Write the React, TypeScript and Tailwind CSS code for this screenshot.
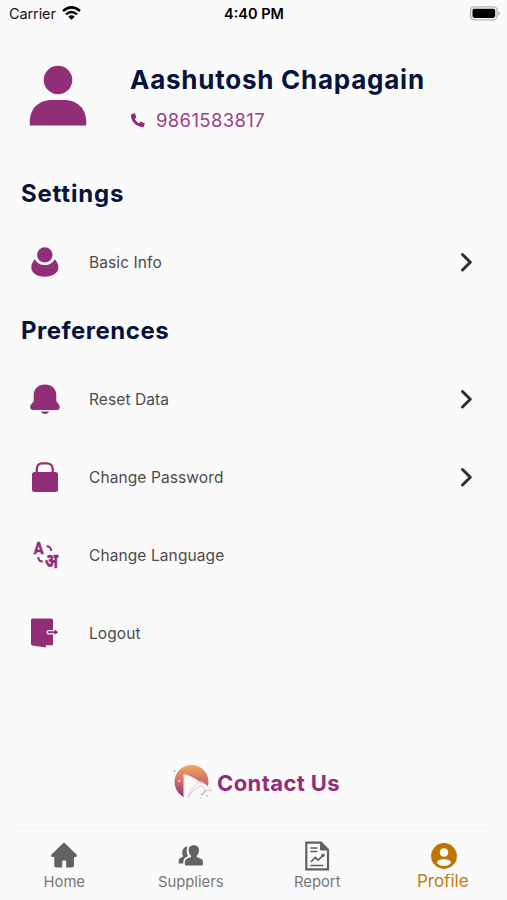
import { JSX, ReactNode } from "react";

type Row = { label: string; icon: ReactNode; arrow: boolean };
type Tab = { label: string; icon: ReactNode; active?: boolean };

function PersonIcon(): JSX.Element {
  return (
    <svg width="58" height="61" viewBox="0 0 58 61" fill="#922e78">
      <circle cx="29" cy="15" r="14.300" />
      <path d="M.8 60.500V56.500C.8 43.500 10 35 23 35H35C48 35 57.200 43.500 57.200 56.500V60.500Z" />
    </svg>
  );
}

function BasicInfoIcon(): JSX.Element {
  return (
    <svg width="30" height="30" viewBox="0 0 30 30" fill="#922e78">
      <circle cx="14.800" cy="7.900" r="7.700" />
      <path d="M4.900 12.200C6.700 15.800 10.300 18 14.800 18S22.900 15.800 24.700 12.200C27 14.500 28.400 17.500 28.400 20.500C28.400 26 22.500 29.700 14.800 29.700S1.300 26 1.300 20.500C1.300 17.500 2.600 14.500 4.900 12.200Z" />
    </svg>
  );
}

function BellIcon(): JSX.Element {
  return (
    <svg width="30" height="31" viewBox="0 0 30 31" fill="#922e78">
      <path d="M15 .5C22 .5 26.300 5 26.300 11V16.500C26.300 18.500 29.800 20 29.800 23C29.800 25 28.700 26 27 26H3C1.300 26 .2 25 .2 23C.2 20 3.700 18.500 3.700 16.500V11C3.700 5 8 .5 15 .5Z" />
      <path d="M10.800 27.500H19C18.500 29 17 30 15 30S11.400 29 10.800 27.500Z" />
    </svg>
  );
}

function LockIcon(): JSX.Element {
  return (
    <svg width="30" height="30" viewBox="0 0 30 30">
      <path
        d="M6.800 11V7C6.800 3.500 9 1.300 12 1.300H17C20 1.300 22.700 3.500 22.700 7V11"
        fill="none"
        stroke="#922e78"
        strokeWidth="2.300"
      />
      <rect x="2" y="10" width="26" height="20" rx="2.500" fill="#922e78" />
    </svg>
  );
}

function LanguageIcon(): JSX.Element {
  return (
    <svg className="overflow-visible" width="30" height="30" viewBox="0 0 30 30" fill="#922e78" stroke="#922e78">
      <text x="3.800" y="14.300" fontSize="16.500" fontWeight="700" strokeWidth=".6" fontFamily="Roboto, sans-serif" textLength="9.800" lengthAdjust="spacingAndGlyphs">
        A
      </text>
      <text x="15" y="27.500" fontSize="20" fontWeight="700" strokeWidth=".6" fontFamily="'Noto Sans', sans-serif" textLength="13" lengthAdjust="spacingAndGlyphs">
        अ
      </text>
      <path d="M16.500 6.300C19 6.300 21 7.800 21.200 11M8.300 17C8.300 20 9.500 21.500 12.800 21.500" fill="none" strokeWidth="2" />
    </svg>
  );
}

function LogoutIcon(): JSX.Element {
  return (
    <svg width="30" height="30" viewBox="0 0 30 30">
      <path d="M2.500 .5H21.500Q23 .5 23 2V27.300H15.800V29.500L2.500 27.500Q1 27.200 1 25.700V2Q1 .5 2.500 .5Z" fill="#922e78" />
      <path d="M18.300 12.600H24V10.300L29.300 14.200L24 18.100V15.800H18.300Q17.200 15.800 17.200 14.200T18.300 12.600Z" fill="#922e78" stroke="#fafafa" strokeWidth="1.200" />
    </svg>
  );
}

function ContactLogo(): JSX.Element {
  return (
    <svg width="40" height="34" viewBox="0 0 40 34">
      <defs>
        <linearGradient id="sunset" x1="0" y1="0" x2="0" y2="1">
          <stop offset="0" stopColor="#edaa55" />
          <stop offset=".5" stopColor="#cd6970" />
          <stop offset="1" stopColor="#8e2679" />
        </linearGradient>
      </defs>
      <circle cx="18.500" cy="17" r="17" fill="url(#sunset)" />
      <path d="M10.500 9Q18 10.500 25.500 16Q33 17 39 25.500L32 26L27 34H10.500Z" fill="#fafafa" />
      <path
        d="M10.700 9.500V33M14 33Q18 23 25.500 17M15.500 32Q20 23 29 21M25.500 16.500Q33 18 38.500 25.500M29 21Q31 23 31.500 25.500L38.500 25.500"
        fill="none"
        stroke="#d3a3bd"
        strokeWidth=".6"
      />
      <g fill="#8b7480">
        <circle cx="1.500" cy="6" r=".8" />
        <circle cx="29" cy="29.500" r=".8" />
        <circle cx="34" cy="31" r=".7" />
        <circle cx="28" cy="33" r=".5" />
      </g>
      <circle cx="6.300" cy="16" r="1" fill="#f3d7e2" />
    </svg>
  );
}

function Chevron(): JSX.Element {
  return (
    <svg width="12" height="20" viewBox="0 0 12 20" fill="none" stroke="#2c2c2c" strokeWidth="2.900" strokeLinecap="round" strokeLinejoin="round">
      <path d="M2.500 2.500L10.300 10.300L2.500 18" />
    </svg>
  );
}

function HomeIcon(): JSX.Element {
  return (
    <svg width="28" height="28" viewBox="0 0 28 28" fill="#626262">
      <path d="M14 .8Q14.600 .8 15.200 1.400L26.500 12.500Q27.500 14.800 25.800 15H24V23.500Q24 25.500 22 25.500H16.200V19.500Q16.200 18.500 15.200 18.500H13.200Q12.200 18.500 12.200 19.500V25.500H6.300Q4.300 25.500 4.300 23.500V15H2.200Q.5 14.800 1.500 12.500L12.800 1.400Q13.400 .8 14 .8Z" />
    </svg>
  );
}

function SuppliersIcon(): JSX.Element {
  return (
    <svg width="26" height="28" viewBox="0 0 26 28" fill="#626262">
      <path d="M9.500 4.500C5.500 4.800 3.500 8.500 4.500 13L5.300 14.500L2 16.200Q.7 17 .7 19V21.500H5.300Q5 16.700 8 15.200L10 14C8.300 11.500 8.200 7.500 9.500 4.500Z" />
      <path d="M15.800 3.200C19.600 3.200 21.200 5.500 21 8.700C20.800 11 20 12.500 18.700 13.800V15L23 16.700Q25 17.500 25 20V22Q25 23.500 23.700 23.500H8.200Q6.800 23.500 6.800 22V20Q6.800 17.500 8.800 16.700L13 15V13.800C11.700 12.500 10.900 11 10.700 8.700C10.500 5.500 12 3.200 15.800 3.200Z" />
    </svg>
  );
}

function ReportIcon(): JSX.Element {
  return (
    <svg width="26" height="30" viewBox="0 0 26 30" fill="none" stroke="#626262">
      <path d="M2.300 1.600H17L24 8.800V28.400H2.300Z" strokeWidth="2.200" />
      <path d="M16.500 1.500V9H23.800Z" fill="#626262" strokeWidth="1" />
      <path d="M6.300 7H13.500M6.300 10.500H13.500M6.300 24.500H19.500" strokeWidth="1.500" />
      <path d="M6.800 21L11.300 16.500L14.300 19L18.800 14.500" strokeWidth="1.700" />
      <circle cx="19" cy="14.300" r="1.300" fill="#626262" />
    </svg>
  );
}

function ProfileIcon(): JSX.Element {
  return (
    <svg width="26" height="26" viewBox="0 0 26 26">
      <circle cx="13" cy="13" r="12.900" fill="#be7503" />
      <circle cx="13" cy="9.500" r="4.300" fill="#fafafa" />
      <path d="M6 20Q6 16.300 13 16.300T20 20C18.500 21.800 16 23 13 23S7.500 21.800 6 20Z" fill="#fafafa" />
    </svg>
  );
}

function SettingRow({ row }: { row: Row }): JSX.Element {
  return (
    <div className="flex h-[78px] items-center pl-[30px] pr-[35px]">
      <div className="flex w-[59px] shrink-0">{row.icon}</div>
      <span className="flex-1 pt-[2px] text-[15.500px] leading-5 tracking-[0.100px] text-[#4b4b4b]">{row.label}</span>
      {row.arrow && <Chevron />}
    </div>
  );
}

export default function App(): JSX.Element {
  const preferences: Row[] = [
    { label: "Reset Data", icon: <BellIcon />, arrow: true },
    { label: "Change Password", icon: <LockIcon />, arrow: true },
    { label: "Change Language", icon: <LanguageIcon />, arrow: false },
    { label: "Logout", icon: <LogoutIcon />, arrow: false },
  ];

  const tabs: Tab[] = [
    { label: "Home", icon: <HomeIcon /> },
    { label: "Suppliers", icon: <SuppliersIcon /> },
    { label: "Report", icon: <ReportIcon /> },
    { label: "Profile", icon: <ProfileIcon />, active: true },
  ];

  return (
    <div className="flex h-[900px] w-[507px] flex-col overflow-hidden bg-[#fafafa] font-['Inter',sans-serif]">
      {/* Status bar */}
      <div className="grid h-7 grid-cols-3 items-center pl-[9px] pr-[7px] text-[14.500px] leading-7 text-[#151515]">
        <div className="flex items-center gap-[6px]">
          <span className="tracking-[-0.100px]">Carrier</span>
          <svg className="-mt-[2px]" width="19" height="14" viewBox="0 0 19 14" fill="none" stroke="#000" strokeWidth="2.500">
            <path d="M1 5Q9.500 -2.300 18 5M4 8.400Q9.500 3.700 15 8.400" />
            <path d="M6.300 10.700Q9.500 8 12.700 10.700L9.500 13.800Z" fill="#000" stroke="none" />
          </svg>
        </div>
        <span className="-ml-[1px] text-center font-semibold text-black">4:40 PM</span>
        <svg className="-mt-[2px] justify-self-end" width="31" height="15" viewBox="0 0 31 15">
          <rect x="1.600" y=".8" width="26.500" height="13" rx="3.500" fill="#fafafa" stroke="#b2b2b2" strokeWidth="1.300" />
          <rect x="3.500" y="2.700" width="22.700" height="9.200" rx="1.800" />
          <path d="M29.300 5Q31 6 31 7.300T29.300 9.700Z" fill="#b2b2b2" />
        </svg>
      </div>

      {/* User */}
      <div className="flex h-[138px] pl-[29px] pt-[37px]">
        <div className="w-[101px]">
          <PersonIcon />
        </div>
        <div>
          <h1 className="text-[26px] font-bold leading-[30px] tracking-[0.750px] text-[#07133a]">Aashutosh Chapagain</h1>
          <div className="mt-[13px] flex items-center gap-[10px]">
            <svg width="16" height="16" viewBox="0 0 16 16" fill="#922e78">
              <path d="M1.300 2.400L4 1.300Q4.700 1 5.100 1.800L6.200 4.800Q6.400 5.400 5.900 5.900L4.700 7Q6 9.800 8.800 11.200L10 9.900Q10.500 9.400 11.100 9.700L14.200 11Q15 11.400 14.700 12.200L13.900 14.500Q13.700 15 13 15C6.300 15 .9 9.700 .9 3.100Q.9 2.600 1.300 2.400Z" />
            </svg>
            <span className="text-[18.500px] leading-6 tracking-[0.350px] text-[#9b4187]">9861583817</span>
          </div>
        </div>
      </div>

      <h2 className="h-[57px] pl-[21px] text-[24px] font-bold leading-[56px] tracking-[0.800px] text-[#07133a]">Settings</h2>
      <SettingRow row={{ label: "Basic Info", icon: <BasicInfoIcon />, arrow: true }} />

      <h2 className="mt-[2px] h-[57px] pl-[21px] text-[24px] font-bold leading-[56px] tracking-[0.500px] text-[#07133a]">Preferences</h2>
      {preferences.map((row) => (
        <SettingRow key={row.label} row={row} />
      ))}

      {/* Contact */}
      <div className="mt-[92px] flex h-9 items-center pl-[173px]">
        <ContactLogo />
        <span className="ml-[4px] mt-[2px] text-[22px] font-bold tracking-[0.400px] text-[#922e78]">Contact Us</span>
      </div>

      {/* Bottom navigation */}
      <nav className="mx-[14px] mt-[28px] border-t border-[#f3f3f3]">
        <div className="-mx-[14px] grid h-[70px] grid-cols-4 pl-[1px]">
          {tabs.map((tab) => (
            <div key={tab.label} className="flex flex-col items-center pt-[11px]">
              <div className="flex h-[31px] items-center">{tab.icon}</div>
              {tab.active ? (
                <span className="mt-[1px] pr-[2px] text-[17px] leading-[19px] text-[#c17c12]">{tab.label}</span>
              ) : (
                <span className="mt-[1px] text-[14.800px] leading-[21px] text-[#777]">{tab.label}</span>
              )}
            </div>
          ))}
        </div>
      </nav>
    </div>
  );
}
